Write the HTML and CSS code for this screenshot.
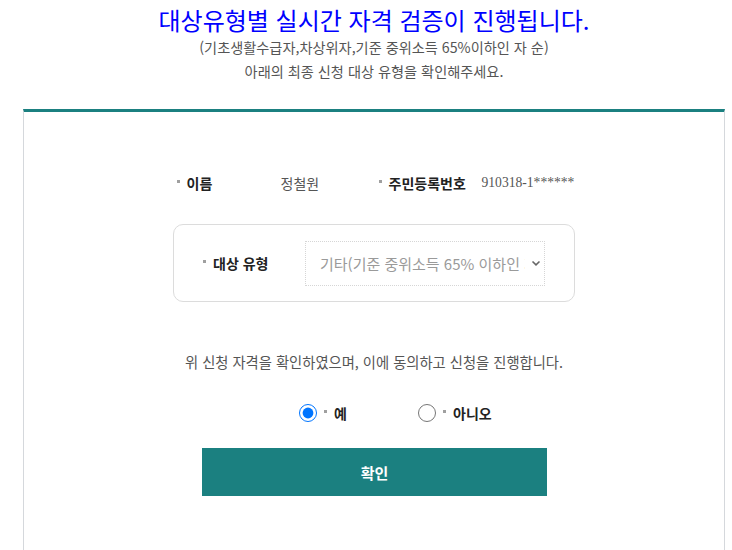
FILE: index.html
```html
<!DOCTYPE html>
<html lang="ko">
<head>
<meta charset="utf-8">
<title>대상유형 자격 검증</title>
<link rel="stylesheet" href="styles.css">
</head>
<body>
<div class="wrap">
  <div class="intro">
    <h1 class="title">대상유형별 실시간 자격 검증이 진행됩니다.</h1>
    <p class="sub">(기초생활수급자,차상위자,기준 중위소득 65%이하인 자 순)</p>
    <p class="sub">아래의 최종 신청 대상 유형을 확인해주세요.</p>
  </div>
  <section class="card">
    <div class="info">
      <span class="lbl bullet w-name">이름</span>
      <span class="val w-nameval">정철원</span>
      <span class="lbl bullet w-id">주민등록번호</span>
      <span class="val num">910318-1******</span>
    </div>
    <div class="typebox">
      <span class="lbl bullet type-lbl">대상 유형</span>
      <div class="select">
        <span class="sel-text">기타(기준 중위소득 65% 이하인 자)</span>
        <svg class="chev" width="10" height="7" viewBox="0 0 10 7"><path d="M1.5 1.5 L5 4.8 L8.5 1.5" fill="none" stroke="#666" stroke-width="1.6"/></svg>
      </div>
    </div>
    <p class="agree">위 신청 자격을 확인하였으며, 이에 동의하고 신청을 진행합니다.</p>
    <div class="radios">
      <label class="opt opt-yes"><input type="radio" name="agree" checked><span class="lbl bullet">예</span></label>
      <label class="opt"><input type="radio" name="agree"><span class="lbl bullet">아니오</span></label>
    </div>
    <div class="btn-row"><button class="btn" type="button">확인</button></div>
  </section>
</div>
</body>
</html>
```
FILE: styles.css
```css
html, body {
  margin: 0;
  padding: 0;
  background: #fff;
}
body {
  font-family: "Noto Sans CJK KR", "Noto Sans", sans-serif;
  color: #555;
}
.wrap {
  margin-left: 23px;
  width: 702px;
}
.intro {
  text-align: center;
  padding-top: 5px;
}
.title {
  margin: 0;
  font-size: 24px;
  line-height: 30px;
  font-weight: 400;
  color: #0000ff;
}
.sub {
  margin: 0;
  font-size: 14.2px;
  line-height: 24px;
  color: #555;
}
.card {
  margin-top: 26px;
  border-top: 3px solid #1b8080;
  border-left: 1px solid #d5d8dc;
  border-right: 1px solid #d5d8dc;
  padding-top: 61px;
  padding-bottom: 60px;
}
.info {
  display: flex;
  justify-content: center;
  align-items: center;
  line-height: 20px;
  height: 20px;
  font-size: 14px;
  padding-left: 2px;
  white-space: nowrap;
}
.lbl {
  font-weight: 700;
  color: #222;
  font-size: 14px;
  white-space: nowrap;
}
.bullet::before {
  content: "";
  display: inline-block;
  width: 3px;
  height: 3px;
  background: #a0a0a0;
  margin-right: 7px;
  vertical-align: 6px;
}
.w-name { width: 104px; }
.w-nameval { width: 98px; }
.w-id { width: 103px; }
.val { color: #555; }
.num {
  font-family: "Liberation Serif", serif;
  font-size: 13.6px;
  width: 92px;
  white-space: nowrap;
}
.typebox {
  width: 402px;
  height: 78px;
  box-sizing: border-box;
  margin: 31px auto 0;
  border: 1px solid #dcdcdc;
  border-radius: 10px;
  display: flex;
  align-items: center;
  padding-left: 29px;
  padding-right: 29px;
}
.type-lbl {
  width: 102px;
}
.select {
  width: 240px;
  height: 45px;
  box-sizing: border-box;
  border: 1px dotted #d6d6d6;
  display: flex;
  align-items: center;
  padding-left: 14px;
  padding-right: 3px;
}
.sel-text {
  flex: 1;
  overflow: hidden;
  white-space: nowrap;
  text-overflow: clip;
  font-size: 15px;
  color: #9a9a9a;
}
.chev {
  margin-left: 6px;
  flex: none;
}
.agree {
  margin: 50px 0 0;
  text-align: center;
  font-size: 14.3px;
  line-height: 20px;
  color: #555;
}
.radios {
  margin-top: 31px;
  display: flex;
  align-items: center;
  padding-left: 275px;
  height: 20px;
}
.opt {
  display: flex;
  align-items: center;
}
.opt-yes { width: 119px; }
.opt input {
  width: 18px;
  height: 18px;
  margin: 0 7px 0 0;
}
.btn-row {
  margin-top: 25px;
  display: flex;
  justify-content: center;
  padding-left: 1px;
}
.btn {
  width: 345px;
  height: 48px;
  border: 0;
  background: #1b8080;
  color: #fff;
  font-family: "Noto Sans CJK KR", sans-serif;
  font-size: 15px;
  font-weight: 700;
  cursor: pointer;
}
```
